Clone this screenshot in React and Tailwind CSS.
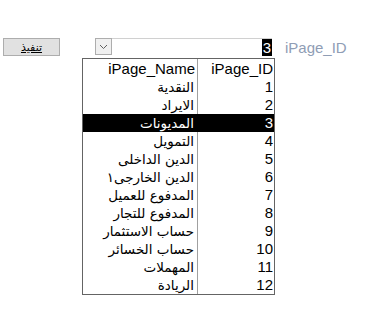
import React from 'react';

const rows = [
  ['النقدية', 1],
  ['الايراد', 2],
  ['المديونات', 3],
  ['التمويل', 4],
  ['الدين الداخلى', 5],
  ['الدين الخارجى١', 6],
  ['المدفوع للعميل', 7],
  ['المدفوع للتجار', 8],
  ['حساب الاستثمار', 9],
  ['حساب الخسائر', 10],
  ['المهملات', 11],
  ['الريادة', 12],
];

const App = () => {
  return (
    <div className="relative w-[366px] h-[332px] bg-white" style={{ fontFamily: '"Liberation Sans", "DejaVu Sans", Arial, sans-serif' }}>
      {/* top bar */}
      <div className="flex items-start pt-[38px]">
        <button className="ml-[3px] w-[57px] h-[18px] bg-[#e1e1e1] border border-[#adadad] text-[11px] leading-none underline text-black">
          تنفيذ
        </button>
        <div className="ml-[35px] flex flex-col">
          <div className="flex h-[19px]">
            <div className="w-[17px] h-[17px] border border-[#adadad] bg-[#f0f0f0] flex items-center justify-center">
              <svg width="9" height="6" viewBox="0 0 9 6" fill="none" stroke="#606060" strokeWidth="1">
                <path d="M1 1 L4.5 4.5 L8 1" />
              </svg>
            </div>
            <div className="w-[160px] h-[17px] border-t border-[#d0d0d0] flex justify-end items-start">
              <span className="bg-black text-white text-[15px] leading-[17px] px-[1px]">3</span>
            </div>
          </div>
        </div>
        <div className="ml-[13px] mt-[1px] text-[15px] text-[#8f9db5] leading-[17px]">iPage_ID</div>
      </div>

      {/* dropdown list */}
      <div className="absolute left-[82px] top-[58px] w-[193px] border border-[#646464] bg-white text-[15px] text-black">
        <div className="flex h-[19px] leading-[19px]">
          <div className="w-[115px] text-right pr-[2px] border-r border-[#a0a0a0]">iPage_Name</div>
          <div className="flex-1 text-right pr-[1px]">iPage_ID</div>
        </div>
        {rows.map(([name, id]) => (
          <div key={id} className={`flex h-[18px] leading-[18px] ${id === 3 ? 'bg-black text-white' : ''}`}>
            <div className={`w-[115px] text-right pr-[3px] text-[13.5px] border-r ${id === 3 ? 'border-black' : 'border-[#a0a0a0]'}`} style={{ fontFamily: '"DejaVu Sans", sans-serif' }}>
              {name}
            </div>
            <div className="flex-1 text-right pr-[1px]">{id}</div>
          </div>
        ))}
      </div>
    </div>
  );
};

export default App;
